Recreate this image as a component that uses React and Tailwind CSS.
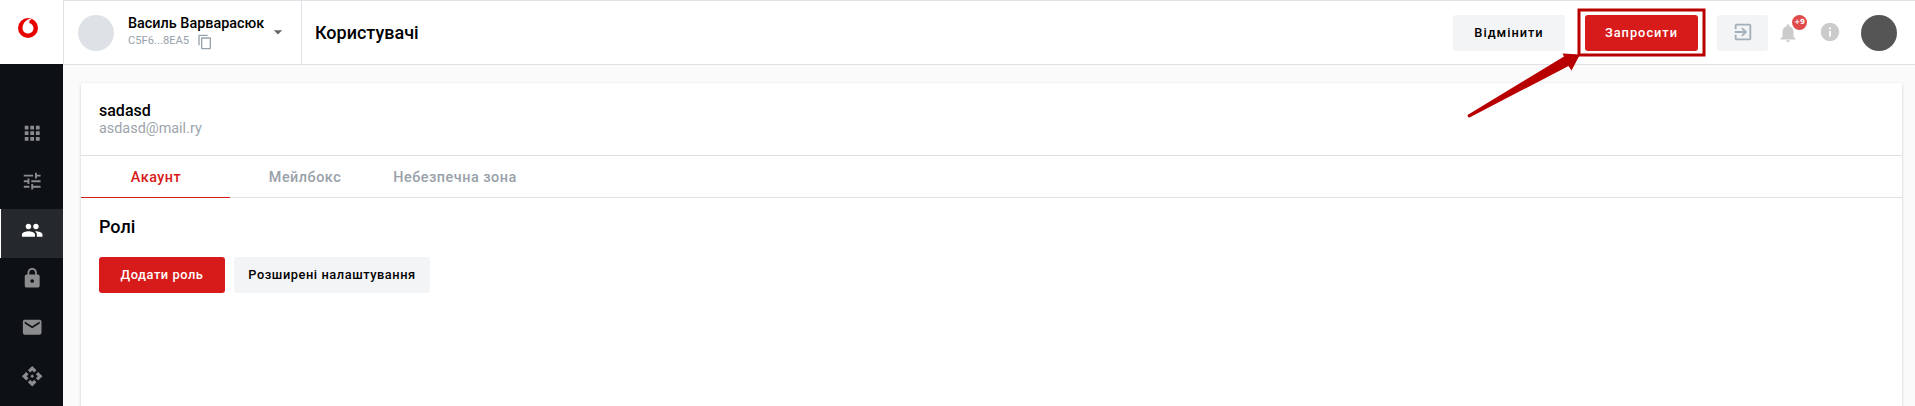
import {
  MdApi,
  MdApps,
  MdArrowDropDown,
  MdContentCopy,
  MdExitToApp,
  MdInfo,
  MdLock,
  MdMail,
  MdNotifications,
  MdPeople,
  MdTune,
} from "react-icons/md";

const navItems = [
  { id: "apps", Icon: MdApps },
  { id: "settings", Icon: MdTune },
  { id: "users", Icon: MdPeople, active: true },
  { id: "security", Icon: MdLock },
  { id: "mail", Icon: MdMail },
  { id: "api", Icon: MdApi },
];

function Logo() {
  return (
    <svg viewBox="0 0 20 20" className="h-5 w-5">
      <circle cx="10" cy="10" r="10" fill="#e60000" />
      <path
        fill="#fff"
        d="M14.4 .8C11.8 1.5 11 3.2 11.3 4.9C13.9 5.6 15.5 7.6 15.5 10.200C15.5 13.2 13.300 15.4 10.200 15.4C7 15.4 4.500 13.200 4.500 9.900C4.500 6.400 7.200 2.500 11 1.100C12.200 .6 13.500 .5 14.4 .8Z"
      />
    </svg>
  );
}

function Sidebar() {
  return (
    <aside className="flex w-[63px] shrink-0 flex-col bg-[#0d1014]">
      <div className="flex h-16 items-start bg-white pl-[18px] pt-[18px]">
        <Logo />
      </div>
      <nav className="flex flex-col pt-12">
        {navItems.map(({ id, Icon, active }) => (
          <div
            key={id}
            className={
              active
                ? "h-[48.6px] border-l border-white bg-[#25282c] pl-5 pt-[9.6px] text-white"
                : "h-[48.6px] border-l border-transparent pl-5 pt-[9.6px] text-[#8b8c8d]"
            }
          >
            <Icon className="h-[22.4px] w-[22.4px]" />
          </div>
        ))}
      </nav>
    </aside>
  );
}

function Button({ className, children }) {
  return (
    <button
      className={`flex h-9 shrink-0 items-center justify-center rounded-[3px] text-[12.8px] font-medium ${className}`}
    >
      {children}
    </button>
  );
}

function Header() {
  return (
    <header className="flex h-[65px] shrink-0 border-y border-l border-[#dee2e6] bg-white">
      <div className="flex w-[238px] shrink-0 border-r border-[#dee2e6] pl-3.5 pt-3.5">
        <div className="h-9 w-9 rounded-full bg-[#dee2e6]" />
        <div className="ml-3.5 pt-px">
          <div className="whitespace-nowrap text-[14.4px] font-medium leading-[16px] text-black">
            Василь Варварасюк
          </div>
          <div className="flex items-center text-[11.2px] leading-[18px] text-[#98a2aa]">
            C5F6...8EA5
            <MdContentCopy className="ml-2 mt-px h-4 w-4" />
          </div>
        </div>
        <MdArrowDropDown className="ml-1 mt-[7px] h-5 w-5 text-[#666]" />
      </div>
      <h1 className="pl-[13px] pt-[20px] text-[18px] font-medium leading-6 text-black">Користувачі</h1>
      <div className="ml-auto flex pr-[18px] pt-3.5">
        <Button className="w-28 bg-[#f3f4f6] tracking-[1px] text-black">Відмінити</Button>
        <div className="relative ml-5">
          <Button className="w-[113px] bg-[#d71a1a] tracking-[1px] text-white">Запросити</Button>
          <svg
            viewBox="0 0 280 118"
            className="pointer-events-none absolute left-[-125px] top-[-15px] z-10 h-[118px] w-[280px] max-w-none"
          >
            <rect x="119" y="10" width="125" height="45" fill="none" stroke="#b80000" strokeWidth="3" />
            <path
              fill="#b80000"
              d="M7.500 115L104 56.500L102.500 53.500L120 54.500L111.500 70.500L108.500 66L9.500 117.500Q7.500 117.500 7.500 115Z"
            />
          </svg>
        </div>
        <div className="ml-[19px] flex h-9 w-[51px] items-center justify-center rounded-[3px] bg-[#f3f4f6] text-[#a3b0b9]">
          <MdExitToApp className="mb-0.5 h-[22px] w-[22px]" />
        </div>
        <div className="relative ml-[9px] mt-[7px] h-[22px] w-[22px] text-[#cbcbcb]">
          <MdNotifications className="h-[22px] w-[22px]" />
          <div className="absolute left-[15px] top-[-7px] flex h-[15px] w-[15px] items-center justify-center rounded-full bg-[#df4b4b] font-['DejaVu_Sans',sans-serif] text-[7px] font-bold text-white">
            +9
          </div>
        </div>
        <MdInfo className="ml-5 mt-[6px] h-[22px] w-[22px] text-[#cbcbcb]" />
        <div className="ml-5 h-9 w-9 rounded-full bg-[#555]" />
      </div>
    </header>
  );
}

function UserCard() {
  return (
    <section className="flex flex-1 flex-col rounded-t-[3px] bg-white shadow-[0_1px_3px_rgba(0,0,0,0.2)]">
      <div className="h-[73px] border-b border-[#dee0e3] pl-[18px] pt-[19px]">
        <div className="text-[16px] font-medium leading-[18px] text-black">sadasd</div>
        <div className="text-[14.4px] leading-[17px] text-[#9da5ac]">asdasd@mail.ry</div>
      </div>
      <div className="flex h-[42px] border-b border-[#dee0e3] text-[14.4px] font-medium tracking-[0.5px] text-[#98a1a9]">
        <div className="-mb-px flex w-[149px] items-center justify-center border-b border-[#d71a1a] pl-px pt-0.5 text-[#d71a1a]">
          Акаунт
        </div>
        <div className="flex w-[150px] items-center justify-center pt-0.5">Мейлбокс</div>
        <div className="flex w-[149px] items-center justify-center whitespace-nowrap pl-px pt-0.5">Небезпечна зона</div>
      </div>
      <div className="pl-[18px] pt-[17px]">
        <h2 className="text-[18px] font-medium leading-6 text-black">Ролі</h2>
        <div className="mt-[18px] flex gap-[9px]">
          <Button className="w-[126px] bg-[#d71a1a] tracking-[0.57px] text-white">Додати роль</Button>
          <Button className="w-[196px] bg-[#f3f4f6] tracking-[0.57px] text-black">Розширені налаштування</Button>
        </div>
      </div>
    </section>
  );
}

export default function App() {
  return (
    <div className="flex h-screen overflow-hidden bg-[#fafafa] font-[Roboto,sans-serif]">
      <Sidebar />
      <div className="flex min-w-0 flex-1 flex-col">
        <Header />
        <main className="flex flex-1 pl-[18px] pr-[13px] pt-[18px]">
          <UserCard />
        </main>
      </div>
    </div>
  );
}
